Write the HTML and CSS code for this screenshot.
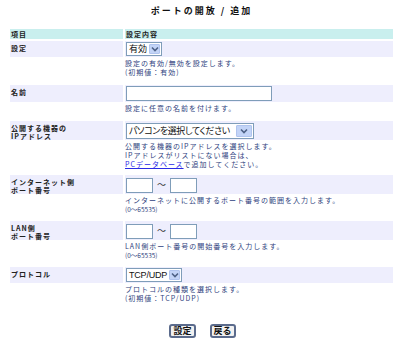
FILE: index.html
```html
<!DOCTYPE html>
<html lang="ja">
<head>
<meta charset="utf-8">
<title>ポートの開放 / 追加</title>
<link rel="stylesheet" href="styles.css">
</head>
<body>
<div class="page">
  <h1 class="title">ポートの開放 / 追加</h1>
  <div class="table">
    <div class="head">
      <div class="hcell">項目</div>
      <div class="hcell">設定内容</div>
    </div>

    <div class="item">
      <div class="row">
        <div class="label">設定</div>
        <div class="ctrl">
          <div class="select sel-state"><span class="val">有効</span><span class="arrow"><svg width="8" height="6" viewBox="0 0 8 6"><path d="M1 1.5 L4 4.5 L7 1.5" fill="none" stroke="#4d6185" stroke-width="1.6"/></svg></span></div>
        </div>
      </div>
      <div class="desc">
        <p>設定の有効/無効を設定します。</p>
        <p>(初期値：有効)</p>
      </div>
    </div>

    <div class="item">
      <div class="row">
        <div class="label">名前</div>
        <div class="ctrl">
          <span class="input name-input"></span>
        </div>
      </div>
      <div class="desc">
        <p>設定に任意の名前を付けます。</p>
      </div>
    </div>

    <div class="item item-ip">
      <div class="row">
        <div class="label"><span class="ln">公開する機器の</span><span class="ln">IPアドレス</span></div>
        <div class="ctrl">
          <div class="select sel-ip"><span class="val">パソコンを選択してください</span><span class="arrow"><svg width="8" height="6" viewBox="0 0 8 6"><path d="M1 1.5 L4 4.5 L7 1.5" fill="none" stroke="#4d6185" stroke-width="1.6"/></svg></span></div>
        </div>
      </div>
      <div class="desc">
        <p>公開する機器のIPアドレスを選択します。</p>
        <p>IPアドレスがリストにない場合は、</p>
        <p><a class="link" href="#">PCデータベース</a>で追加してください。</p>
      </div>
    </div>

    <div class="item item-port">
      <div class="row">
        <div class="label"><span class="ln">インターネット側</span><span class="ln">ポート番号</span></div>
        <div class="ctrl port-ctrl">
          <span class="input port-input"></span><span class="tilde">～</span><span class="input port-input"></span>
        </div>
      </div>
      <div class="desc">
        <p>インターネットに公開するポート番号の範囲を入力します。</p>
        <p class="range">(0～65535)</p>
      </div>
    </div>

    <div class="item item-port">
      <div class="row">
        <div class="label"><span class="ln">LAN側</span><span class="ln">ポート番号</span></div>
        <div class="ctrl port-ctrl">
          <span class="input port-input"></span><span class="tilde">～</span><span class="input port-input"></span>
        </div>
      </div>
      <div class="desc">
        <p>LAN側ポート番号の開始番号を入力します。</p>
        <p class="range">(0～65535)</p>
      </div>
    </div>

    <div class="item item-last">
      <div class="row">
        <div class="label">プロトコル</div>
        <div class="ctrl">
          <div class="select sel-proto"><span class="val">TCP/UDP</span><span class="arrow"><svg width="8" height="6" viewBox="0 0 8 6"><path d="M1 1.5 L4 4.5 L7 1.5" fill="none" stroke="#4d6185" stroke-width="1.6"/></svg></span></div>
        </div>
      </div>
      <div class="desc">
        <p>プロトコルの種類を選択します。</p>
        <p>(初期値：TCP/UDP)</p>
      </div>
    </div>

    <div class="buttons">
      <button class="btn" type="button">設定</button>
      <button class="btn" type="button">戻る</button>
    </div>
  </div>
</div>
</body>
</html>
```

FILE: styles.css
```css
* { box-sizing: border-box; }
body {
  margin: 0;
  background: #ffffff;
  font-family: "Noto Sans CJK JP", "Noto Sans", sans-serif;
  color: #222222;
}
.page {
  padding: 0 7px 0 10px;
}
.title {
  margin: 0;
  padding-top: 6px;
  height: 29px;
  font-size: 9px;
  line-height: 10px;
  font-weight: bold;
  letter-spacing: 2px;
  text-align: center;
  color: #111111;
}
.head {
  display: grid;
  grid-template-columns: 113px 1fr;
  column-gap: 2px;
  margin-bottom: 2px;
}
.hcell {
  background: #c9efee;
  height: 10px;
  padding-left: 1px;
  font-size: 7px;
  line-height: 10px;
  font-weight: bold;
  letter-spacing: 1px;
}
.item {
  margin-bottom: 8px;
}
.item-ip { margin-bottom: 6px; }
.item-port { margin-bottom: 7px; }
.item-last { margin-bottom: 21px; }
.row {
  display: grid;
  grid-template-columns: 113px 1fr;
  column-gap: 2px;
}
.label, .ctrl {
  background: #eeeefd;
}
.label {
  padding: 3px 1px 0 1px;
  font-size: 7px;
  line-height: 8px;
  font-weight: bold;
  letter-spacing: 1px;
}
.label .ln {
  display: block;
  height: 8px;
  overflow: visible;
}
.ctrl {
  padding: 1px;
  display: flex;
  align-items: center;
}
.port-ctrl {
  padding: 2px 1px 1px 1px;
}
.desc {
  padding: 2px 0 0 115px;
  font-size: 7px;
  line-height: 9px;
  letter-spacing: 1px;
  color: #2f3f7e;
}
.desc p { margin: 0; white-space: nowrap; }
.desc .range { letter-spacing: 0; font-size: 6.5px; }
.link {
  color: #2a2ae6;
  text-decoration: underline;
}
.select {
  display: flex;
  align-items: stretch;
  border: 1px solid #7f9db9;
  background: #ffffff;
  height: 14px;
  font-family: "Liberation Sans", "Noto Sans CJK JP", sans-serif;
  font-size: 9px;
  color: #111111;
  white-space: nowrap;
}
.select .val {
  flex: 1;
  min-width: 0;
  padding-left: 2px;
  line-height: 12px;
  overflow: hidden;
}
.select .arrow {
  flex: none;
  width: 11px;
  margin: 1px;
  background: #c3d4f7;
  border: 1px solid #b0c4ee;
  border-radius: 1px;
  display: flex;
  align-items: center;
  justify-content: center;
}
.sel-state { width: 36px; }
.sel-state .val { padding-left: 2px; font-family: "Noto Sans CJK JP", sans-serif; }
.sel-ip { width: 128px; height: 16px; }
.sel-ip .val {
  line-height: 14px;
  font-family: "Noto Sans CJK JP", sans-serif;
  font-feature-settings: "palt";
  letter-spacing: -0.4px;
}
.sel-ip .arrow { width: 16px; }
.sel-proto { width: 56px; }
.sel-proto .val { padding-left: 2px; letter-spacing: -0.2px; }
.input {
  display: inline-block;
  border: 1px solid #7f9db9;
  background: #ffffff;
}
.name-input { width: 146px; height: 15px; }
.port-input { width: 27px; height: 15px; }
.tilde {
  display: inline-block;
  width: 17px;
  text-align: center;
  font-size: 9px;
  line-height: 10px;
  color: #333333;
}
.buttons {
  display: flex;
  justify-content: center;
  gap: 14px;
  padding-left: 2px;
}
.btn {
  font-family: "Noto Sans CJK JP", sans-serif;
  font-size: 9px;
  font-weight: bold;
  height: 14px;
  padding: 0 2px;
  line-height: 10px;
  border: 2px solid #5b6b8c;
  border-radius: 3px;
  background: #f1f1f1;
  color: #111111;
}
```
